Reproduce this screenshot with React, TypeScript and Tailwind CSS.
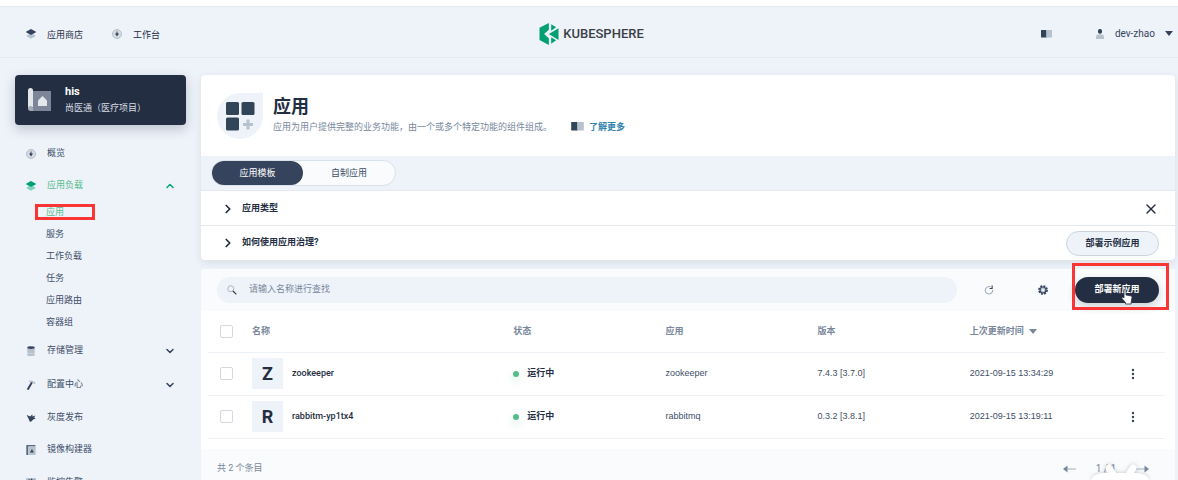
import React from 'react';
import { ChevronDown, ChevronRight, ChevronUp, X } from 'lucide-react';

type IconProps = { className?: string };

function LayersIcon({ className = '', green = false }: IconProps & { green?: boolean }) {
  const top = green ? '#009f74' : '#36435c';
  const low = green ? '#84d2bc' : '#b6c2cd';
  return (
    <svg viewBox="0 0 16 16" className={className} aria-hidden="true">
      <path d="M1 10.500 5 8l3 1.500L11 8l4 2.500v1L8 15.500l-7-4z" fill={low} />
      <path d="M8 0 16 4.200v1L8 9.400 0 5.200v-1z" fill={top} />
    </svg>
  );
}

function DashboardIcon({ className = '' }: IconProps) {
  return (
    <svg viewBox="0 0 16 16" className={className} aria-hidden="true">
      <circle cx="8" cy="8" r="7.200" fill="#d5dce4" stroke="#b0bac6" strokeWidth="1.400" />
      <path d="M8 2.500 9.200 7h2L8 12 4.800 7h2z" fill="#36435c" />
    </svg>
  );
}

function StorageIcon({ className = '' }: IconProps) {
  return (
    <svg viewBox="0 0 16 16" className={className} aria-hidden="true">
      <path d="M2 3h12v3.700c0 .8-12 .8-12 0z" fill="#b6c2cd" />
      <rect x="2" y="6.500" width="12" height="4.500" rx="1" fill="#b6c2cd" />
      <rect x="2" y="11.600" width="12" height="4.400" rx="1.500" fill="#b6c2cd" />
      <ellipse cx="8" cy="2.500" rx="6" ry="2.300" fill="#36435c" />
    </svg>
  );
}

function HammerIcon({ className = '' }: IconProps) {
  return (
    <svg viewBox="0 0 16 16" className={className} aria-hidden="true">
      <path d="M4 2.200C7-.5 12 .4 15.500 5l-1.800 2C12 5 10.500 4.400 9 4.400z" fill="#b6c2cd" />
      <path d="m8 3.200 2.800 1L4.200 16 1.200 14.800z" fill="#36435c" />
    </svg>
  );
}

function BirdIcon({ className = '' }: IconProps) {
  return (
    <svg viewBox="0 0 16 16" className={className} aria-hidden="true">
      <path d="m1 3 6 2.500L10 2l.5 3.500 4.500-1.500-2 3.200 2.500 1.800-3.500.9L8.500 13.500 6 14 4.500 10z" fill="#36435c" />
    </svg>
  );
}

function BuilderIcon({ className = '' }: IconProps) {
  return (
    <svg viewBox="0 0 16 16" className={className} aria-hidden="true">
      <path d="M.5 0H15v2.500H3.500V16h-3z" fill="#5a6880" />
      <rect x="3.500" y="2.500" width="12" height="13.500" fill="#b6c2cd" />
      <path d="m9.500 6.500 3.200 5.500H6.300z" fill="#36435c" />
    </svg>
  );
}

function MonitorIcon({ className = '' }: IconProps) {
  return (
    <svg viewBox="0 0 16 16" className={className} aria-hidden="true">
      <rect width="16" height="15" rx="1" fill="#b6c2cd" />
      <path d="M2 5 5 1.500l2 2 2-3 2 3 3-1L12.500 7l1.500 5H2l1.500-4z" fill="#36435c" />
    </svg>
  );
}

function BookIcon({ className = '' }: IconProps) {
  return (
    <svg viewBox="0 0 14 10" className={className} aria-hidden="true">
      <path d="M0 0h6.200l.8.6V10l-.8-.6H0z" fill="#324558" />
      <path d="M14 0H7.800L7 .6V10l.8-.6H14z" fill="#b6c2cd" />
    </svg>
  );
}

function UserIcon({ className = '' }: IconProps) {
  return (
    <svg viewBox="0 0 16 20" className={className} aria-hidden="true">
      <path d="M0 20v-4.500C0 12 3 10.500 8 10.500s8 1.500 8 5V20z" fill="#b6c2cd" />
      <rect x="4" y="0" width="8" height="9.500" rx="3.500" fill="#324558" />
    </svg>
  );
}

function Caret({ className = '' }: IconProps) {
  return (
    <svg viewBox="0 0 8 5" className={className} aria-hidden="true">
      <path d="M0 0h8L4 5z" fill="currentColor" />
    </svg>
  );
}

function Logo() {
  return (
    <a href="#home" aria-label="KubeSphere" className="flex items-center gap-1 text-[#3b3f45]">
      <svg viewBox="0 0 57 66" className="h-[22px] w-5" aria-hidden="true">
        <path d="M0 14 28 0v20L14 33l14 13v20L0 51z" fill="#00a075" />
        <path d="m35 4 15 9-15 10z" fill="#00a075" />
        <path d="M57 16v35L28 33z" fill="#00a075" />
        <path d="m35 43 15 9-15 10z" fill="#00a075" />
      </svg>
      <span className="text-[13px] font-medium">KUBESPHERE</span>
    </a>
  );
}

function Header() {
  return (
    <header className="grid h-[52px] grid-cols-3 items-center border-y border-[#e3e9f0] pl-[10px] pr-[5px] pt-[3px]">
      <nav className="flex items-center gap-[29px] pl-4 pt-1 text-[#242e42]">
        <a href="#store" className="flex items-center gap-[11px]">
          <LayersIcon className="mb-1 size-[10px]" />
          应用商店
        </a>
        <a href="#workbench" className="flex items-center gap-[11px]">
          <DashboardIcon className="mb-1 size-[10px]" />
          工作台
        </a>
      </nav>
      <div className="flex justify-center">
        <Logo />
      </div>
      <div className="flex items-center justify-end text-[#36435c]">
        <a href="#docs" aria-label="文档">
          <BookIcon className="h-2 w-[11px]" />
        </a>
        <button type="button" className="ml-11 flex items-center">
          <UserIcon className="h-[10px] w-2" />
          <span className="ml-[11px] text-[10px]">dev-zhao</span>
          <Caret className="ml-[10px] h-[5px] w-2" />
        </button>
      </div>
    </header>
  );
}

type NavEntry = {
  label: string;
  icon: React.ReactNode;
  expandable?: boolean;
  active?: boolean;
  children?: string[];
};

const NAV: NavEntry[] = [
  { label: '概览', icon: <DashboardIcon className="size-[10px]" /> },
  {
    label: '应用负载',
    icon: <LayersIcon green className="size-[10px]" />,
    active: true,
    children: ['应用', '服务', '工作负载', '任务', '应用路由', '容器组'],
  },
  { label: '存储管理', icon: <StorageIcon className="size-[10px]" />, expandable: true },
  { label: '配置中心', icon: <HammerIcon className="size-[10px]" />, expandable: true },
  { label: '灰度发布', icon: <BirdIcon className="size-[10px]" /> },
  { label: '镜像构建器', icon: <BuilderIcon className="size-[10px]" /> },
  { label: '监控告警', icon: <MonitorIcon className="size-[10px]" />, expandable: true },
];

function Sidebar() {
  return (
    <aside className="w-[171px] shrink-0 text-[#404e68]">
      <button
        type="button"
        className="flex h-[50px] w-full items-center gap-3 rounded bg-[#242e42] pl-3 text-left text-white shadow-[0_4px_12px_rgba(36,46,66,0.25)]"
      >
        <svg viewBox="0 0 26 26" className="size-[26px]" aria-hidden="true">
          <path d="M4 4h20v20H4z" fill="#7d8698" />
          <path d="M1 3.500a2.500 2.500 0 0 1 5 0V20H4a3 3 0 0 0-3 2z" fill="#e3e7ec" />
          <path d="M1 22a2.500 2.500 0 0 1 5-1v3H3.500A2.500 2.500 0 0 1 1 22z" fill="#a6adba" />
          <path d="M11 13.500 15.500 9l4.500 4.500V19h-9z" fill="#e3e7ec" />
        </svg>
        <span className="flex flex-col">
          <strong className="text-[11px] leading-4">his</strong>
          <span className="leading-4 text-[#d8dee5]">尚医通（医疗项目）</span>
        </span>
      </button>
      <nav className="pt-[13px]">
        {NAV.map((item) => (
          <div key={item.label}>
            <a
              href="#nav"
              className={`flex items-center gap-[11px] pl-[11px] pr-[10px] ${item.expandable ? 'h-[34px]' : 'h-8'} ${
                item.active ? 'text-[#55bc8a]' : ''
              }`}
            >
              {item.icon}
              <span className="grow">{item.label}</span>
              {item.active && <ChevronUp className="size-3 text-[#00a971]" strokeWidth={3} />}
              {item.expandable && <ChevronDown className="size-3 text-[#36435c]" strokeWidth={3} />}
            </a>
            {item.children && (
              <ul>
                {item.children.map((child, index) => (
                  <li key={child} className="relative">
                    <a
                      href="#nav"
                      className={`flex h-[22px] items-center pl-[31px] ${index === 0 ? 'text-[#55bc8a]' : ''}`}
                    >
                      {child}
                    </a>
                    {index === 0 && (
                      <span className="pointer-events-none absolute left-5 top-[2px] h-4 w-[60px] border-3 border-[#fb3434]" />
                    )}
                  </li>
                ))}
              </ul>
            )}
          </div>
        ))}
      </nav>
    </aside>
  );
}

function IntroCard() {
  return (
    <section className="overflow-hidden rounded bg-white shadow-[0_3px_8px_rgba(36,46,66,0.1)]">
      <div className="flex h-[81px] items-center gap-[10px] pl-4">
        <svg viewBox="0 0 46 46" className="size-[46px]" aria-hidden="true">
          <path d="M23 0h23v23A23 23 0 1 1 23 0z" fill="#eef3fa" />
          <rect x="9" y="9" width="13" height="13" rx="1.500" fill="#324558" />
          <rect x="24.500" y="9" width="13" height="13" rx="1.500" fill="#324558" />
          <rect x="9" y="24.500" width="13" height="13" rx="1.500" fill="#324558" />
          <path d="M29.500 26.500h3V30H36v3h-3.500v3.500h-3V33H26v-3h3.500z" fill="#b6c2cd" />
        </svg>
        <div className="pb-[2px]">
          <h1 className="text-lg font-bold leading-6 text-[#242e42]">应用</h1>
          <p className="flex items-center leading-4 text-[#79879c]">
            应用为用户提供完整的业务功能，由一个或多个特定功能的组件组成。
            <a href="#more" className="ml-[19px] flex items-center gap-[5px] font-bold text-[#3385b0]">
              <BookIcon className="h-[9px] w-[13px]" />
              了解更多
            </a>
          </p>
        </div>
      </div>
      <div className="flex h-[35px] items-center border-b border-[#e3e9ef] bg-[#eef3fa] pl-[10px]">
        <div className="flex h-[26px] w-[185px] rounded-full border border-[#d8e0e8] bg-[#f9fbfd]">
          <button type="button" className="h-full w-[91px] rounded-full bg-[#36435c] pt-px text-white">
            应用模板
          </button>
          <button type="button" className="h-full grow rounded-full pt-px text-[#404e68]">
            自制应用
          </button>
        </div>
      </div>
      <div className="flex h-[35px] items-center justify-between border-b border-[#e3e9ef] pl-5 pr-4 pt-px font-bold text-[#242e42]">
        <button type="button" className="flex items-center gap-[7px]">
          <ChevronRight className="size-[14px]" strokeWidth={3} />
          应用类型
        </button>
        <button type="button" aria-label="关闭">
          <X className="size-4" />
        </button>
      </div>
      <div className="flex h-[34px] items-center justify-between pl-5 pr-4 font-bold text-[#242e42]">
        <button type="button" className="flex items-center gap-[7px]">
          <ChevronRight className="size-[14px]" strokeWidth={3} />
          如何使用应用治理?
        </button>
        <button type="button" className="h-[25px] w-[93px] rounded-full border border-[#ccd3db] bg-[#eef3fa] pt-px">
          部署示例应用
        </button>
      </div>
    </section>
  );
}

function Toolbar() {
  return (
    <div className="flex h-[42px] items-center rounded-t bg-[#f9fbfd] px-4">
      <label className="flex h-[26px] grow items-center gap-3 rounded-full bg-[#eef3fa] pl-[10px]">
        <svg viewBox="0 0 16 16" className="size-[10px]" aria-hidden="true">
          <circle cx="6" cy="6" r="4.800" fill="none" stroke="#a5b0bd" strokeWidth="1.500" />
          <path d="m9.500 9.500 5.500 5.500" stroke="#36435c" strokeWidth="2" />
        </svg>
        <input
          type="search"
          aria-label="查找"
          placeholder="请输入名称进行查找"
          className="grow bg-transparent outline-none placeholder:text-[#79879c]"
        />
      </label>
      <button type="button" aria-label="刷新" className="ml-[27px]">
        <svg viewBox="0 0 16 16" className="size-[10px]" aria-hidden="true">
          <path d="M10.500 3A6 6 0 1 0 14 8" fill="none" stroke="#a5b0bd" strokeWidth="1.800" />
          <path d="M9 5.500h4V.8" fill="none" stroke="#36435c" strokeWidth="1.800" />
        </svg>
      </button>
      <button type="button" aria-label="设置" className="ml-11">
        <svg viewBox="0 0 16 16" className="size-[10px]" aria-hidden="true">
          <circle cx="8" cy="8" r="6.400" fill="none" stroke="#36435c" strokeWidth="2.800" strokeDasharray="3 2.020" />
          <circle cx="8" cy="8" r="4.800" fill="#b6c2cd" stroke="#36435c" strokeWidth="1.800" />
          <circle cx="8" cy="8" r="1.800" fill="#f9fbfd" />
        </svg>
      </button>
      <div className="relative ml-[27px]">
        <button
          type="button"
          className="block h-[26px] w-[84px] rounded-full bg-[#242e42] font-bold text-white shadow-[0_4px_8px_rgba(36,46,66,0.2)]"
        >
          部署新应用
        </button>
        <span className="pointer-events-none absolute -left-[3px] -right-[10px] -top-[14px] h-[47px] border-3 border-[#fb3434]" />
        <svg viewBox="0 0 12 16" className="absolute left-[46px] top-3 h-4 w-3" aria-hidden="true">
          <path
            d="M3 1.500c0-1.200 2-1.200 2 0V6l4.500.8c1 .2 1.500.8 1.500 1.700L10.200 13v2H4.500v-1.500L1 9.500c-.6-1 .6-1.800 2-.6z"
            fill="#fff"
            stroke="#242e42"
            strokeWidth=".8"
          />
        </svg>
      </div>
    </div>
  );
}

const ROWS = [
  { letter: 'Z', name: 'zookeeper', app: 'zookeeper', version: '7.4.3 [3.7.0]', time: '2021-09-15 13:34:29' },
  { letter: 'R', name: 'rabbitm-yp1tx4', app: 'rabbitmq', version: '0.3.2 [3.8.1]', time: '2021-09-15 13:19:11' },
];

function Check({ label }: { label: string }) {
  return (
    <input
      type="checkbox"
      aria-label={label}
      className="block size-[13px] appearance-none rounded-xs border border-[#d3d9e0] bg-white checked:bg-[#36435c]"
    />
  );
}

function AppTable() {
  return (
    <div className="pb-[10px] pl-[7px] pr-[10px]">
      <table className="w-full table-fixed border-collapse text-left">
        <thead>
          <tr className="h-[41px] border-b border-[#eef3f8] text-[#79879c]">
            <th className="w-11 pl-3">
              <Check label="全选" />
            </th>
            <th className="w-[27.3%]">名称</th>
            <th className="w-[15.9%]">状态</th>
            <th className="w-[15.9%]">应用</th>
            <th className="w-[15.9%]">版本</th>
            <th>
              <button type="button" className="flex items-center gap-[5px]">
                上次更新时间
                <Caret className="h-[5px] w-2" />
              </button>
            </th>
            <th className="w-10" aria-label="操作" />
          </tr>
        </thead>
        <tbody>
          {ROWS.map((row) => (
            <tr
              key={row.name}
              className="h-[43px] border-b border-[#eef3f8] font-[Liberation_Sans,Noto_Sans_CJK_SC,sans-serif] text-[#404e68]"
            >
              <td className="pl-3">
                <Check label={row.name} />
              </td>
              <td>
                <div className="flex items-center gap-[9px] font-[Roboto,sans-serif] font-medium text-[#242e42]">
                  <span className="flex size-[31px] items-center justify-center bg-[#eef3fa] text-lg font-bold">
                    {row.letter}
                  </span>
                  <a href="#app">{row.name}</a>
                </div>
              </td>
              <td>
                <div className="flex items-center gap-2 font-bold text-[#242e42]">
                  <span className="size-[6px] rounded-full bg-[#55bc8a] shadow-[0_4px_8px_rgba(85,188,138,0.4)]" />
                  运行中
                </div>
              </td>
              <td>{row.app}</td>
              <td>{row.version}</td>
              <td>{row.time}</td>
              <td>
                <button type="button" aria-label="更多" className="block pl-[6px]">
                  <svg viewBox="0 0 4 12" className="h-3 w-1" fill="#36435c" aria-hidden="true">
                    <circle cx="2" cy="2" r="1.200" />
                    <circle cx="2" cy="6" r="1.200" />
                    <circle cx="2" cy="10" r="1.200" />
                  </svg>
                </button>
              </td>
            </tr>
          ))}
        </tbody>
      </table>
    </div>
  );
}

function PageArrow({ className = '' }: IconProps) {
  return (
    <svg viewBox="0 0 13 8" className={className} aria-hidden="true">
      <path d="M3 4h10" stroke="#a5b0bd" strokeWidth="1" />
      <path d="M0 4 4.500.5v7z" fill="#79879c" />
    </svg>
  );
}

function Mascot() {
  return (
    <svg
      viewBox="0 0 64 18"
      className="pointer-events-none absolute bottom-0 right-6 h-[18px] w-16 drop-shadow-[0_0_2px_rgba(36,46,66,0.25)]"
      aria-hidden="true"
    >
      <path d="m19 6 5 8M43 6l-5 8" stroke="#fff" strokeWidth="7" strokeLinecap="round" />
      <path d="M1 18c2-5 7-7 14-7h31c7 0 11 2 13 7z" fill="#fff" />
    </svg>
  );
}

function TableFooter() {
  return (
    <footer className="flex h-10 items-center justify-between bg-[#f9fbfd] px-4 text-[#79879c]">
      <span>共 2 个条目</span>
      <div className="flex items-center gap-5 pr-[10px] text-[10px]">
        <button type="button" aria-label="上一页">
          <PageArrow className="h-2 w-[13px]" />
        </button>
        <span>1 / 1</span>
        <button type="button" aria-label="下一页">
          <PageArrow className="h-2 w-[13px] rotate-180" />
        </button>
      </div>
    </footer>
  );
}

export default function App() {
  return (
    <div className="relative h-screen overflow-hidden bg-[#eef3fa] font-[Roboto,Noto_Sans_CJK_SC,sans-serif] text-[9px]">
      <div className="h-[6px] bg-white" />
      <Header />
      <div className="flex gap-[15px] pl-[15px] pr-[3px] pt-[17px]">
        <Sidebar />
        <main className="flex min-w-0 grow flex-col gap-[9px]">
          <IntroCard />
          <section className="rounded bg-white">
            <Toolbar />
            <AppTable />
            <TableFooter />
          </section>
        </main>
      </div>
      <Mascot />
    </div>
  );
}
